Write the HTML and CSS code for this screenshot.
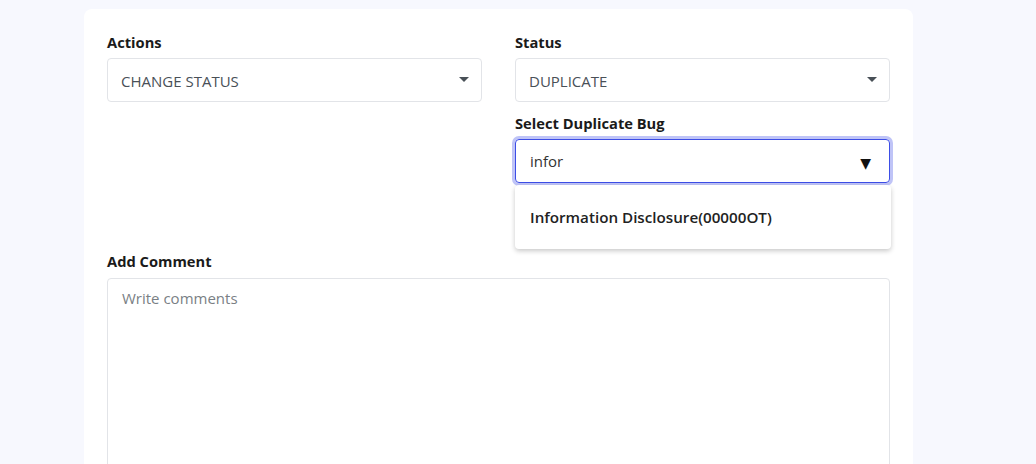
FILE: index.html
```html
<!DOCTYPE html>
<html>
<head>
<meta charset="utf-8">
<link rel="stylesheet" href="styles.css">
</head>
<body>
<div class="page">
  <div class="card">
    <div class="row">
      <div class="col">
        <div class="field">
          <label class="label">Actions</label>
          <div class="select">
            <span class="value">CHANGE STATUS</span>
            <span class="caret"></span>
          </div>
        </div>
      </div>
      <div class="col">
        <div class="field">
          <label class="label">Status</label>
          <div class="select">
            <span class="value">DUPLICATE</span>
            <span class="caret"></span>
          </div>
        </div>
        <div class="field combo-field">
          <label class="label">Select Duplicate Bug</label>
          <div class="combo">
            <div class="combo-input">
              <span class="typed">infor</span>
              <span class="bigcaret">&#9660;</span>
            </div>
            <div class="menu">
              <div class="option">Information Disclosure(00000OT)</div>
            </div>
          </div>
        </div>
      </div>
    </div>
    <div class="field comment-field">
      <label class="label">Add Comment</label>
      <div class="textarea"><span class="placeholder">Write comments</span></div>
    </div>
  </div>
</div>
</body>
</html>
```

FILE: styles.css
```css
* { box-sizing: border-box; }
html, body { margin: 0; padding: 0; }
body {
  background: #f7f8fe;
  font-family: "Open Sans", "Noto Sans", sans-serif;
  color: #212529;
  width: 1036px;
  height: 464px;
  overflow: hidden;
}
.page {
  padding: 9px 123px 0 84px;
}
.card {
  background: #fff;
  border-radius: 8px;
  padding: 23px 23px 0 23px;
  height: 480px;
}
.row {
  display: flex;
  gap: 33px;
}
.col {
  flex: 1;
  display: flex;
  flex-direction: column;
}
.label {
  display: block;
  font-weight: 700;
  font-size: 14.7px;
  line-height: 20px;
  color: #1a1a1a;
  margin-bottom: 6px;
}
.field { margin-bottom: 11px; }
.select {
  height: 44px;
  border: 1px solid #e2e4e8;
  border-radius: 4px;
  display: flex;
  align-items: center;
  justify-content: space-between;
  padding: 2px 12px 0 13px;
  font-size: 15px;
  color: #495057;
}
.caret {
  width: 0; height: 0;
  border-left: 5px solid transparent;
  border-right: 5px solid transparent;
  border-top: 5px solid #495057;
  margin-top: -4px;
}
.combo-field { margin-bottom: 0; }
.combo { position: relative; }
.combo-input {
  height: 44px;
  border: 1px solid #3d4ee6;
  border-radius: 4px;
  box-shadow: 0 0 0 3px #bfc4f7;
  display: flex;
  align-items: center;
  justify-content: space-between;
  padding: 0 18px 0 14px;
  font-size: 15px;
  color: #333;
}
.bigcaret {
  font-size: 14px;
  color: #111;
  margin-top: 3px;
  font-family: "DejaVu Sans", sans-serif;
}
.menu {
  position: absolute;
  left: 0; right: -1px;
  top: 46px;
  height: 64px;
  background: #fff;
  border-radius: 4px;
  box-shadow: 0 2px 5px rgba(0,0,0,0.22);
  display: flex;
  align-items: center;
  padding: 0 15px;
  z-index: 2;
}
.option {
  font-size: 15.2px;
  font-weight: 600;
  color: #222;
}
.comment-field { margin-top: 68px; }
.comment-field .label { margin-bottom: 7px; }
.textarea {
  height: 300px;
  border: 1px solid #e2e4e8;
  border-radius: 4px;
  padding: 9px 14px;
  font-size: 15px;
}
.placeholder { color: #7a7f85; }
```
